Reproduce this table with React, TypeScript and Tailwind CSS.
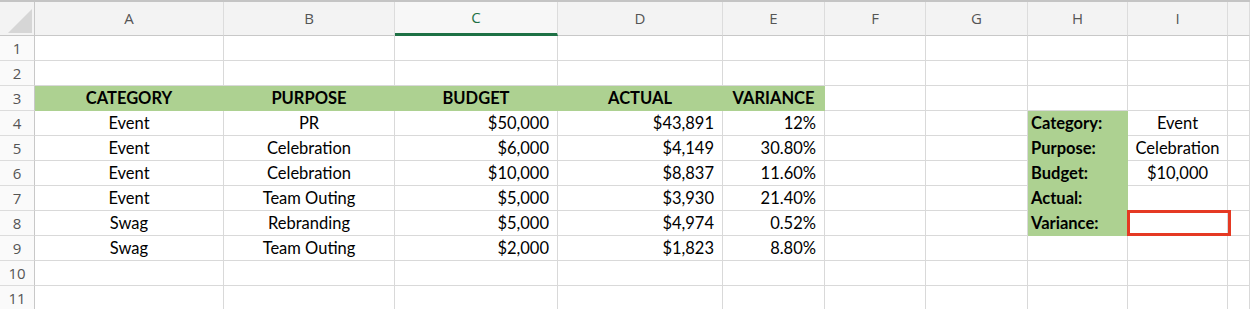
const cols = ["A", "B", "C", "D", "E", "F", "G", "H", "I", ""];

const rows: string[][] = [
  ["", "", "", "", "", "", "", "", "", ""],
  ["", "", "", "", "", "", "", "", "", ""],
  ["CATEGORY", "PURPOSE", "BUDGET", "ACTUAL", "VARIANCE", "", "", "", "", ""],
  ["Event", "PR", "$50,000", "$43,891", "12%", "", "", "Category:", "Event", ""],
  ["Event", "Celebration", "$6,000", "$4,149", "30.80%", "", "", "Purpose:", "Celebration", ""],
  ["Event", "Celebration", "$10,000", "$8,837", "11.60%", "", "", "Budget:", "$10,000", ""],
  ["Event", "Team Outing", "$5,000", "$3,930", "21.40%", "", "", "Actual:", "", ""],
  ["Swag", "Rebranding", "$5,000", "$4,974", "0.52%", "", "", "Variance:", "", ""],
  ["Swag", "Team Outing", "$2,000", "$1,823", "8.80%", "", "", "", "", ""],
  ["", "", "", "", "", "", "", "", "", ""],
  ["", "", "", "", "", "", "", "", "", ""],
];

const gridCols =
  "grid grid-cols-[35px_189px_171px_163px_165px_102px_101px_102px_100px_100px_1fr]";

function cellClass(r: number, c: number) {
  const green = (r === 2 && c <= 4) || (r >= 3 && r <= 7 && c === 7);
  const base = "h-[25px] flex items-center border-r border-b whitespace-nowrap overflow-hidden";
  const fill = green ? "bg-[#add191] border-[#add191]" : "bg-white border-[#d9d9d9]";
  let align = "justify-center";
  if (r >= 3 && c >= 2 && c <= 4) align = "justify-end pr-[8px]";
  if (c === 7) align = "justify-start pl-[3px]";
  const weight = r === 2 || c === 7 ? "font-bold" : "font-normal";
  return `${base} ${fill} ${align} ${weight}`;
}

export default function App() {
  return (
    <div className="w-[1250px] h-[309px] overflow-hidden bg-white font-['Lato','Liberation_Sans',sans-serif] text-[16.5px] text-[#000]">
      <div className="relative">
        {/* column headers */}
        <div className={`${gridCols} h-[36px] border-t-2 border-[#c4c4c4] bg-[#f3f3f3]`}>
          <div className="relative border-r border-b border-[#c8c8c8]">
            <svg className="absolute left-[8px] top-[7px]" width="24" height="24" viewBox="0 0 24 24">
              <polygon points="24,0 24,24 0,24" fill="#d6d6d6" />
            </svg>
          </div>
          {cols.map((l, i) => (
            <div
              key={i}
              className={`flex items-center justify-center border-r border-[#dcdcdc] font-['Open_Sans',sans-serif] text-[15px] ${
                l === "C"
                  ? "border-b-[3px] border-b-[#1e7145] text-[#1e7145] bg-[#f7f7f7]"
                  : "border-b border-b-[#c8c8c8] text-[#555]"
              }`}
            >
              {l}
            </div>
          ))}
        </div>

        {/* rows */}
        {rows.map((row, r) => (
          <div key={r} className={gridCols}>
            <div className="h-[25px] flex items-center justify-center bg-[#fafafa] border-r border-b border-r-[#c8c8c8] border-b-[#dcdcdc] font-['Open_Sans',sans-serif] text-[15px] text-[#555]">
              {r + 1}
            </div>
            {row.map((v, c) => (
              <div key={c} className={cellClass(r, c)}>
                {v}
              </div>
            ))}
          </div>
        ))}

        {/* highlight on I8 */}
        <div className="absolute left-[1127px] top-[210px] w-[104px] h-[26px] border-[3px] border-[#e53923]" />
      </div>
    </div>
  );
}
